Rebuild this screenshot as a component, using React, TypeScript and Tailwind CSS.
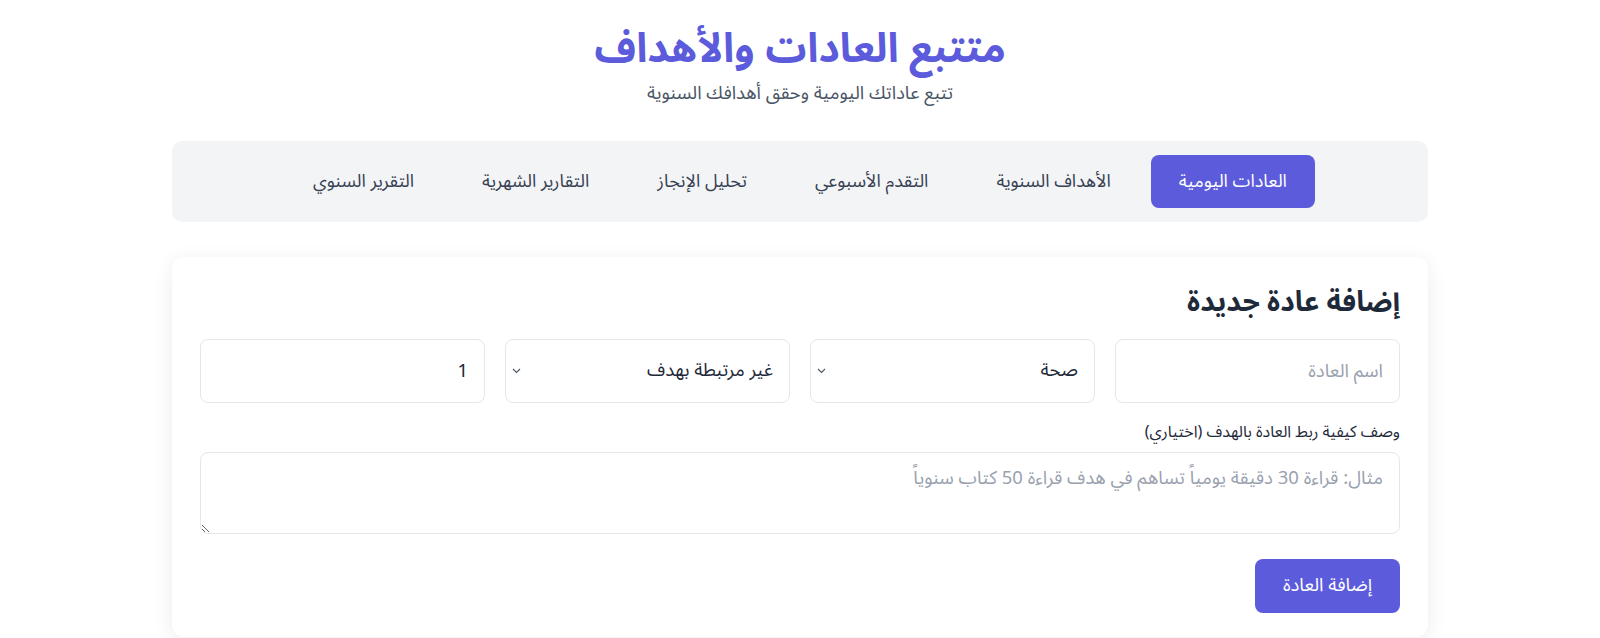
import React from "react";

const tabs = [
  "العادات اليومية",
  "الأهداف السنوية",
  "التقدم الأسبوعي",
  "تحليل الإنجاز",
  "التقارير الشهرية",
  "التقرير السنوي",
];

function Chevron() {
  return (
    <svg
      className="pointer-events-none absolute left-[7px] top-1/2 -translate-y-1/2"
      width="9"
      height="6"
      viewBox="0 0 9 6"
      fill="none"
    >
      <path d="M1 1l3.5 3.5L8 1" stroke="#4b5563" strokeWidth="1.1" />
    </svg>
  );
}

const field =
  "h-[64px] w-full rounded-lg border border-gray-200 bg-white px-4 text-[18.5px] text-gray-800 outline-none placeholder:text-gray-400";

export default function App() {
  return (
    <div
      dir="rtl"
      className="min-h-screen bg-white text-gray-800"
      style={{ fontFamily: '"Noto Sans Arabic", "DejaVu Sans", "Noto Sans", sans-serif' }}
    >
      <div className="mx-auto max-w-[1256px] pt-[25px]">
        <header className="text-center">
          <h1 className="text-[41px] font-bold leading-[48px] text-[#5b5bdc]">متتبع العادات والأهداف</h1>
          <p className="mt-[7px] text-[18.5px] leading-[28px] text-gray-600">تتبع عاداتك اليومية وحقق أهدافك السنوية</p>
        </header>

        <nav className="mt-[33px] flex h-[81px] items-center justify-center gap-3 rounded-[10px] bg-[#f3f4f6] px-2">
          {tabs.map((t, i) => (
            <button
              key={t}
              className={
                i === 0
                  ? "h-[53px] rounded-lg bg-[#5b5bdc] px-7 text-[18px] text-white"
                  : "h-[53px] rounded-lg px-7 text-[18px] text-gray-700"
              }
            >
              {t}
            </button>
          ))}
        </nav>

        <section className="mt-[35px] rounded-xl bg-white px-7 pb-6 pt-[26px] shadow-[0_4px_20px_rgba(0,0,0,0.08)]">
          <h2 className="text-[28px] font-bold leading-[40px] text-gray-800">إضافة عادة جديدة</h2>

          <div className="mt-[16px] grid grid-cols-4 gap-5">
            <input placeholder="اسم العادة" className={field} />
            <div className="relative">
              <select defaultValue="health" className={`${field} appearance-none`}>
                <option value="health">صحة</option>
                <option value="study">تعلم</option>
                <option value="work">عمل</option>
              </select>
              <Chevron />
            </div>
            <div className="relative">
              <select defaultValue="none" className={`${field} appearance-none`}>
                <option value="none">غير مرتبطة بهدف</option>
              </select>
              <Chevron />
            </div>
            <input type="number" defaultValue={1} className={field} />
          </div>

          <label className="mt-[17px] block text-[16px] leading-[24px] text-gray-800">
            وصف كيفية ربط العادة بالهدف (اختياري)
          </label>
          <textarea
            rows={2}
            placeholder="مثال: قراءة 30 دقيقة يومياً تساهم في هدف قراءة 50 كتاب سنوياً"
            className="mt-2 block h-[82px] w-full rounded-lg border border-gray-200 px-4 py-[12px] text-[18.5px] leading-[28px] outline-none placeholder:text-gray-400"
          />

          <div className="mt-[25px] flex">
            <button className="h-[54px] rounded-lg bg-[#5b5bdc] px-7 text-[18.5px] text-white">إضافة العادة</button>
          </div>
        </section>
      </div>
    </div>
  );
}
